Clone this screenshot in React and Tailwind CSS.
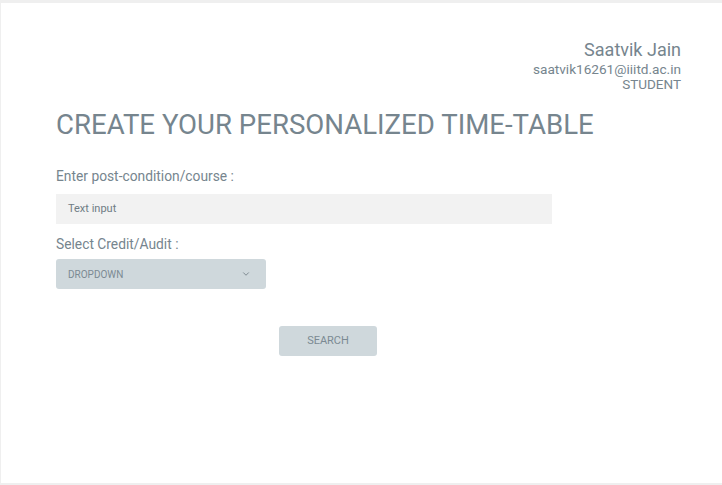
import { ChevronDown } from "lucide-react";

export default function App() {
  return (
    <div className="w-[722px] h-[485px] bg-[#efefef] pt-[3px] pl-[1px] pb-[2px] font-['Roboto',sans-serif]">
      <div className="bg-white h-full text-[#76858e]">
        <div className="flex flex-col items-end pr-[41px] pt-[36px]">
          <div className="text-[18px] leading-[22px]">Saatvik Jain</div>
          <div className="text-[13.6px] leading-[16px]">saatvik16261@iiitd.ac.in</div>
          <div className="text-[13.5px] leading-[14px]">STUDENT</div>
        </div>
        <div className="pl-[55px]">
          <h1 className="text-[27.6px] leading-[32px] mt-[18px]">CREATE YOUR PERSONALIZED TIME-TABLE</h1>
          <div className="text-[13.8px] leading-[16px] mt-[27px]">Enter post-condition/course :</div>
          <div className="mt-[10px] w-[496px] h-[30px] bg-[#f2f2f2] flex items-center pl-[12px] text-[11px] text-[#6f7c85]">
            Text input
          </div>
          <div className="text-[13.8px] leading-[16px] mt-[12px]">Select Credit/Audit :</div>
          <div className="mt-[7px] w-[210px] h-[30px] bg-[#cfd8dc] rounded-[3px] flex items-center justify-between pl-[12px] pr-[15px] text-[10px] text-[#7b8a93]">
            <span>DROPDOWN</span>
            <ChevronDown size={10} strokeWidth={2.4} className="text-[#7f8b92]" />
          </div>
          <div className="mt-[37px] ml-[223px] w-[98px] h-[30px] bg-[#cfd8dc] rounded-[3px] flex items-center justify-center text-[11px] text-[#7b8a93]">
            SEARCH
          </div>
        </div>
      </div>
    </div>
  );
}
